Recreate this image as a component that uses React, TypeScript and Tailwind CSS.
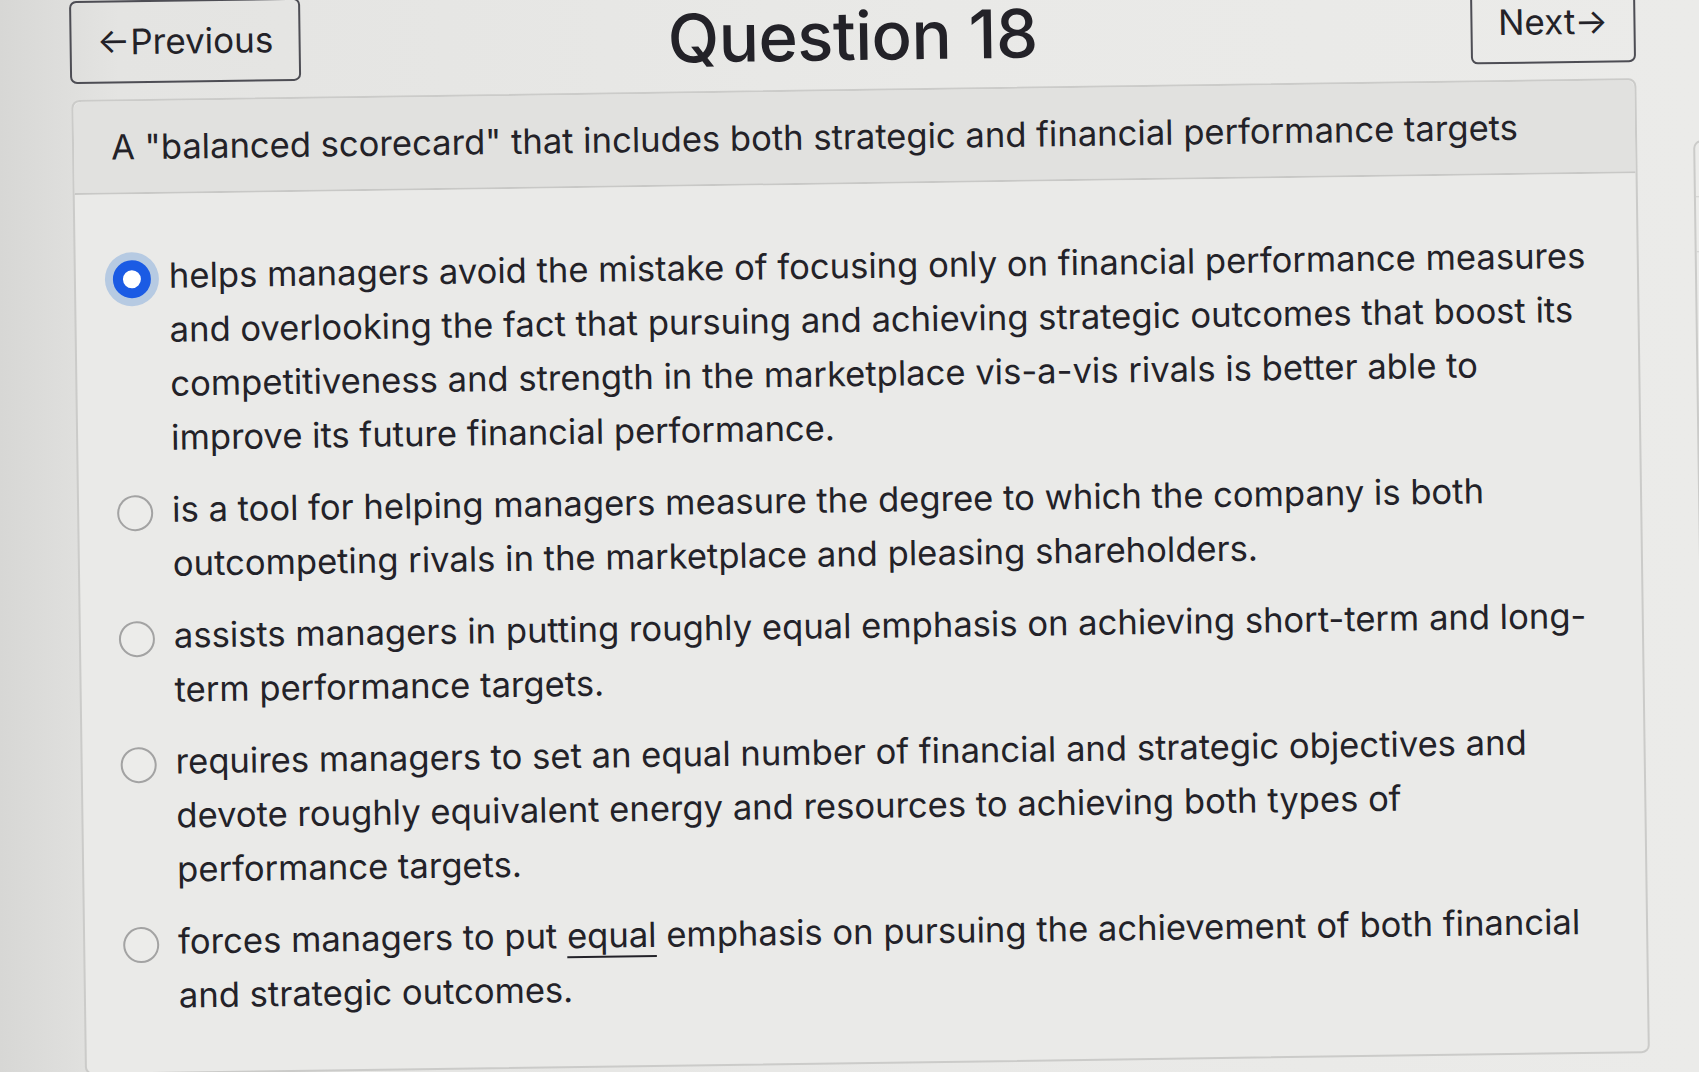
import type { ReactNode } from 'react';

type Option = {
  text: ReactNode;
  selected?: boolean;
};

const options: Option[] = [
  {
    text: 'helps managers avoid the mistake of focusing only on financial performance measures and overlooking the fact that pursuing and achieving strategic outcomes that boost its competitiveness and strength in the marketplace vis-a-vis rivals is better able to improve its future financial performance.',
    selected: true,
  },
  {
    text: 'is a tool for helping managers measure the degree to which the company is both outcompeting rivals in the marketplace and pleasing shareholders.',
  },
  {
    text: 'assists managers in putting roughly equal emphasis on achieving short-term and long-term performance targets.',
  },
  {
    text: 'requires managers to set an equal number of financial and strategic objectives and devote roughly equivalent energy and resources to achieving both types of performance targets.',
  },
  {
    text: (
      <>
        forces managers to put{' '}
        <span className="underline decoration-2 underline-offset-[8px]">equal</span> emphasis on
        pursuing the achievement of both financial and strategic outcomes.
      </>
    ),
  },
];

function Radio({ selected }: { selected?: boolean }) {
  return (
    <div className="flex h-[54px] w-[38px] shrink-0 items-center justify-center pt-2">
      {selected ? (
        <span className="block h-[38px] w-[38px] rounded-full border-[10px] border-[#1b5be4] bg-white ring-[8px] ring-[#b6cae2]" />
      ) : (
        <span className="block h-[36px] w-[36px] rounded-full border-2 border-[#a3a3a3] bg-[#ececea]" />
      )}
    </div>
  );
}

export default function App() {
  return (
    <div className="h-[1072px] w-full overflow-hidden bg-[linear-gradient(90deg,#d7d7d5_0%,#e4e4e2_7%,#e9e9e7_55%,#ebebe9_100%)] font-[Inter,sans-serif] text-[#232228]">
      <div className="w-[1699px] origin-top-left -rotate-[0.8deg]">
        <div className="flex">
          <div className="ml-[69px] w-[1566px] shrink-0">
            {/* Top navigation */}
            <div className="grid h-[85px] grid-cols-3 items-center pt-[2px]">
              <button className="flex h-[83px] w-[231px] items-center justify-center justify-self-start rounded-[7px] border-2 border-[#4d4d54] text-[35px] leading-none">
                ←Previous
              </button>
              <h1 className="mt-2 text-center text-[67px] leading-[1.1] font-medium tracking-[-0.5px]">
                Question 18
              </h1>
              <button className="flex h-[83px] w-[165px] items-center justify-center justify-self-end rounded-[7px] border-2 border-[#4d4d54] text-[35px] leading-none">
                Next→
              </button>
            </div>

            {/* Question card */}
            <div className="mt-[16px] ml-[1px] rounded-[8px] border-2 border-[#cbcbc9] bg-[#eaeae8]">
              <div className="flex h-[93px] items-center rounded-t-[8px] border-b-2 border-[#c8c8c6] bg-[#e1e1df] pl-[37px] text-[34.6px]">
                A "balanced scorecard" that includes both strategic and financial performance targets
              </div>
              <div className="flex flex-col gap-[18px] pt-[54px] pr-[40px] pb-[50px] pl-[37px]">
                {options.map((option, i) => (
                  <label key={i} className="flex gap-[18px]">
                    <Radio selected={option.selected} />
                    <span className="text-[34.6px] leading-[54px]">{option.text}</span>
                  </label>
                ))}
              </div>
            </div>
          </div>

          {/* Edge of the side panel */}
          <div className="mt-[164px] ml-[56px] h-[700px] w-[300px] shrink-0 rounded-tl-[8px] border-2 border-[#cbcbc9] bg-[#ececea]">
            <div className="h-[55px] border-b border-[#d0d0ce]" />
            <div className="h-[55px] border-b border-[#d0d0ce]" />
          </div>
        </div>
      </div>
    </div>
  );
}
